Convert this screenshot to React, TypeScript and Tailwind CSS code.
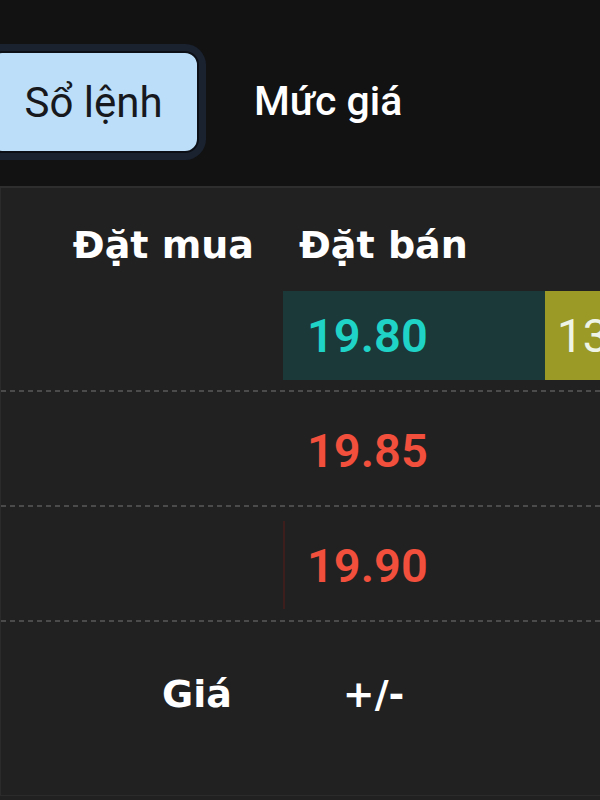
export default function App() {
  const dash =
    "h-[2px] w-full bg-[linear-gradient(to_right,#4b4b4b_5px,transparent_5px)] bg-[length:9px_2px] bg-repeat-x";
  const num = "font-['Roboto'] font-semibold text-[47px] leading-none";
  const head = "font-['DejaVu_Sans'] font-bold text-[38px] text-white leading-none";
  return (
    <div className="w-[600px] h-[800px] bg-[#212121] overflow-hidden flex flex-col">
      {/* Tabs */}
      <div className="h-[186px] shrink-0 bg-[#121212] pt-[51px]">
        <div className="flex items-center h-[102px]">
          <div className="-ml-[12px] w-[211px] h-[102px] shrink-0 rounded-[14px] bg-[#bcdef8] border-2 border-[#0c0f15] ring-[7px] ring-[#1a2230] flex items-center justify-center font-['Roboto'] text-[42px] text-[#16181d]">
            Sổ lệnh
          </div>
          <div className="ml-[55px] font-['Roboto'] font-medium text-[41px] text-white">
            Mức giá
          </div>
        </div>
      </div>
      <div className="h-[2px] shrink-0 bg-[#2e2e2e]" />
      {/* Panel */}
      <div className="flex-1 border-l border-b border-[#2b2b2b] mb-[4px] flex flex-col">
        {/* header */}
        <div className="h-[89px] pt-[24px] flex items-center shrink-0">
          <div className={`w-[282px] text-right pr-[29px] ${head}`}>Đặt mua</div>
          <div className={`pl-[16px] ${head}`}>Đặt bán</div>
        </div>
        {/* row 1 */}
        <div className="h-[115px] shrink-0 flex flex-col">
          <div className="pt-[14px] flex">
            <div className="w-[282px] shrink-0" />
            <div className="w-[262px] h-[89px] shrink-0 bg-[#1b3939] flex items-center pl-[24px]">
              <span className={`${num} text-[#1fd3c6]`}>19.80</span>
            </div>
            <div className="flex-1 h-[89px] bg-[#9c9a26] flex items-center pl-[12px]">
              <span className="font-['Roboto'] text-[46px] leading-none text-[#eef4e6]">13</span>
            </div>
          </div>
          <div className="flex-1" />
          <div className={dash} />
        </div>
        {/* row 2 */}
        <div className="h-[115px] shrink-0 flex flex-col">
          <div className="pt-[14px] flex">
            <div className="w-[282px] shrink-0" />
            <div className="w-[262px] h-[89px] shrink-0 flex items-center pl-[24px]">
              <span className={`${num} text-[#f2503d]`}>19.85</span>
            </div>
          </div>
          <div className="flex-1" />
          <div className={dash} />
        </div>
        {/* row 3 */}
        <div className="h-[115px] shrink-0 flex flex-col">
          <div className="pt-[14px] flex">
            <div className="w-[282px] shrink-0" />
            <div className="w-[262px] h-[88px] shrink-0 flex items-center border-l-2 border-[#3e1d1d] pl-[22px]">
              <span className={`${num} text-[#f2503d]`}>19.90</span>
            </div>
          </div>
          <div className="flex-1" />
          <div className={dash} />
        </div>
        {/* footer header */}
        <div className="pt-[28px] h-[116px] flex items-center shrink-0">
          <div className={`pl-[161px] ${head}`}>Giá</div>
          <div className={`ml-[111px] ${head}`}>+/-</div>
        </div>
      </div>
    </div>
  );
}
